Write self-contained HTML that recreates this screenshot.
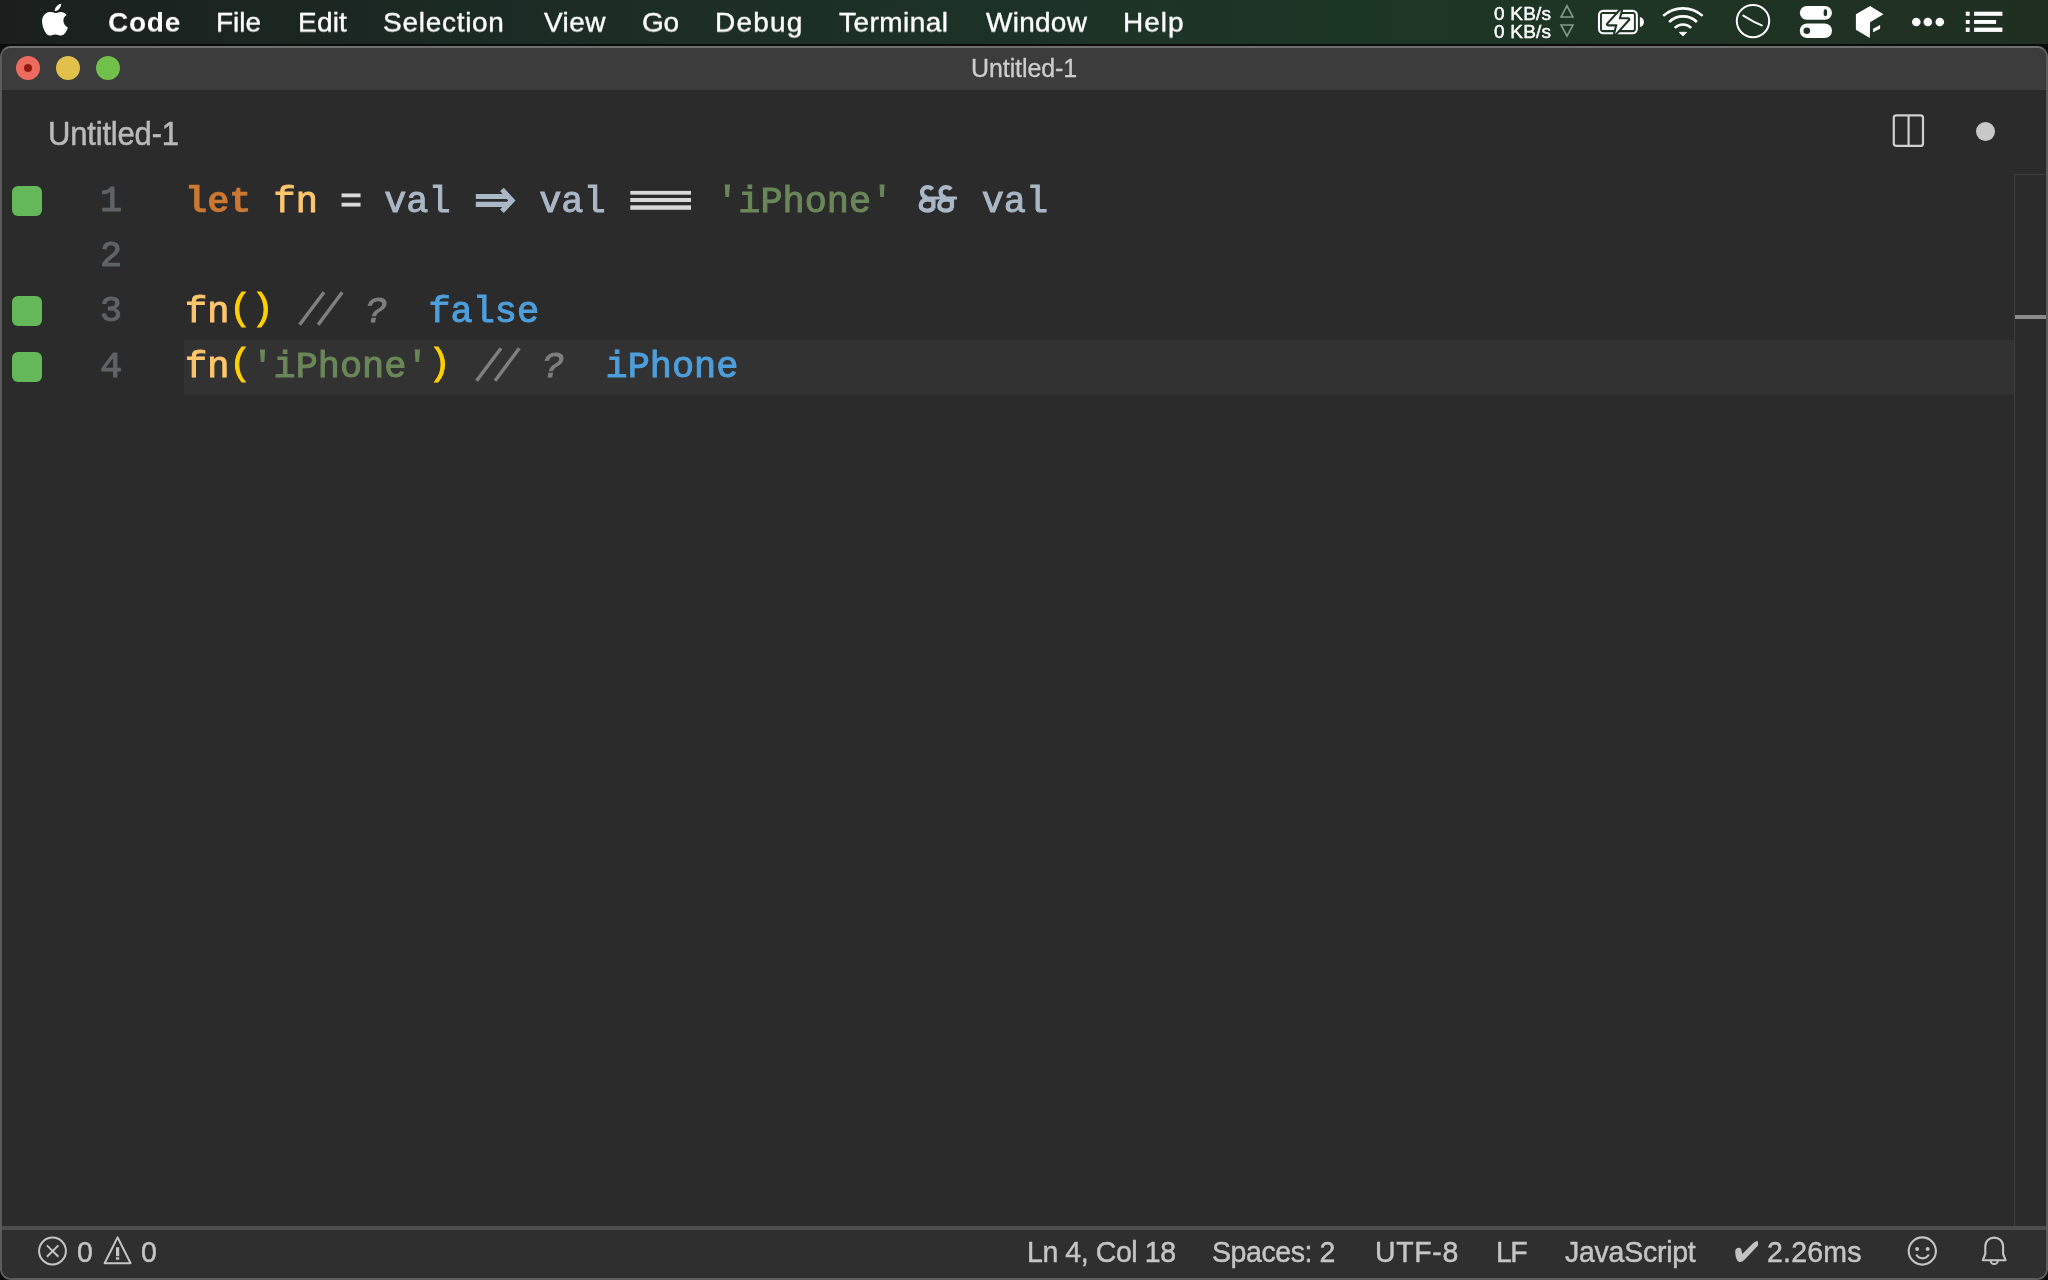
<!DOCTYPE html>
<html><head><meta charset="utf-8">
<style>
*{margin:0;padding:0;box-sizing:border-box}
html,body{width:2048px;height:1280px;overflow:hidden;background:#0b0d0c}
body{position:relative;font-family:"Liberation Sans",sans-serif}
.t,.code,.ln{will-change:transform}
.a{position:absolute}
.t{position:absolute;white-space:nowrap;line-height:1}
.code{position:absolute;white-space:pre;line-height:1;font-family:"Liberation Mono",monospace;-webkit-text-stroke:1px currentColor}
.code span{-webkit-text-stroke:1px currentColor}
.gm{position:absolute;left:12px;width:30px;height:30px;border-radius:6px;background:#65b85a}
.ln{position:absolute;font-family:"Liberation Mono",monospace;color:#5f6367;line-height:1;white-space:pre;-webkit-text-stroke:1.1px #5f6367}
</style></head>
<body>
<div class="a" style="left:0;top:0;width:2048px;height:44px;background:linear-gradient(90deg,#1a1f1e 0px,#1b2420 200px,#1c2d26 620px,#1d3326 1100px,#1c3626 1340px,#1f3424 1720px,#1f2e21 2048px)"></div>
<svg class="a" style="left:36px;top:0" width="40" height="40" viewBox="0 0 40 40"><path fill="#fff" d="M19.4 13.1 C17.5 12.2 15.5 11.8 13.4 12 C9 12.5 6 16.5 6.1 21.5 C6.2 27 9.5 35.5 13.8 35.6 C15.8 35.6 17 34.5 19.4 34.5 C21.8 34.5 23 35.6 25 35.6 C28.5 35.5 31 30.5 31.9 27.5 C29 26.3 27.4 23.5 27.4 20.6 C27.4 18 28.8 16 30.6 15 C29 12.8 26.8 12 24.7 12 C22.5 12 21 13.1 19.4 13.1 Z M18.75 11.1 C18.6 8 21.5 4.2 25.2 3.75 C25.3 7.2 22.2 11 18.75 11.1 Z"/></svg>
<div id="m_code" class="t" style="left:107.68px;top:8.96px;font-size:28px;letter-spacing:0.745px;font-family:'Liberation Sans',sans-serif;font-weight:bold;font-style:normal;color:#fff;transform:scaleY(0.9818);transform-origin:0 0;">Code</div><div id="m_file" class="t" style="left:216.36px;top:9.2px;font-size:28px;letter-spacing:-0.05px;font-family:'Liberation Sans',sans-serif;font-weight:normal;font-style:normal;color:#fff;-webkit-text-stroke:0.4px #fff;transform:scaleY(0.9818);transform-origin:0 0;">File</div><div id="m_edit" class="t" style="left:297.8px;top:9.2px;font-size:28px;letter-spacing:0.212px;font-family:'Liberation Sans',sans-serif;font-weight:normal;font-style:normal;color:#fff;-webkit-text-stroke:0.4px #fff;transform:scaleY(0.9818);transform-origin:0 0;">Edit</div><div id="m_sel" class="t" style="left:383.44px;top:9.2px;font-size:28px;letter-spacing:0.72px;font-family:'Liberation Sans',sans-serif;font-weight:normal;font-style:normal;color:#fff;-webkit-text-stroke:0.4px #fff;transform:scaleY(0.9818);transform-origin:0 0;">Selection</div><div id="m_view" class="t" style="left:543.56px;top:9.2px;font-size:28px;letter-spacing:0.424px;font-family:'Liberation Sans',sans-serif;font-weight:normal;font-style:normal;color:#fff;-webkit-text-stroke:0.4px #fff;transform:scaleY(0.9818);transform-origin:0 0;">View</div><div id="m_go" class="t" style="left:642.36px;top:9.2px;font-size:28px;letter-spacing:-0.32px;font-family:'Liberation Sans',sans-serif;font-weight:normal;font-style:normal;color:#fff;-webkit-text-stroke:0.4px #fff;transform:scaleY(0.9818);transform-origin:0 0;">Go</div><div id="m_debug" class="t" style="left:714.92px;top:9.2px;font-size:28px;letter-spacing:1.2px;font-family:'Liberation Sans',sans-serif;font-weight:normal;font-style:normal;color:#fff;-webkit-text-stroke:0.4px #fff;transform:scaleY(0.9818);transform-origin:0 0;">Debug</div><div id="m_term" class="t" style="left:839.0px;top:9.2px;font-size:28px;letter-spacing:0.457px;font-family:'Liberation Sans',sans-serif;font-weight:normal;font-style:normal;color:#fff;-webkit-text-stroke:0.4px #fff;transform:scaleY(0.9818);transform-origin:0 0;">Terminal</div><div id="m_win" class="t" style="left:985.64px;top:9.2px;font-size:28px;letter-spacing:0.256px;font-family:'Liberation Sans',sans-serif;font-weight:normal;font-style:normal;color:#fff;-webkit-text-stroke:0.4px #fff;transform:scaleY(0.9818);transform-origin:0 0;">Window</div><div id="m_help" class="t" style="left:1123.24px;top:9.2px;font-size:28px;letter-spacing:1.015px;font-family:'Liberation Sans',sans-serif;font-weight:normal;font-style:normal;color:#fff;-webkit-text-stroke:0.4px #fff;transform:scaleY(0.9818);transform-origin:0 0;">Help</div><div id="m_kb1" class="t" style="left:1494.4px;top:3.8px;font-size:19px;letter-spacing:0.224px;font-family:'Liberation Sans',sans-serif;font-weight:normal;-webkit-text-stroke:0.45px #fff;font-style:normal;color:#fff;">0 KB/s</div><div id="m_kb2" class="t" style="left:1494.4px;top:21.72px;font-size:19px;letter-spacing:0.224px;font-family:'Liberation Sans',sans-serif;font-weight:normal;-webkit-text-stroke:0.45px #fff;font-style:normal;color:#fff;">0 KB/s</div>
<!-- status icons top right -->
<svg class="a" style="left:1556px;top:0" width="22" height="44" viewBox="0 0 22 44">
  <path d="M11 5.8 L17 17 L5 17 Z" fill="none" stroke="#86958c" stroke-width="1.6" stroke-linejoin="miter"/>
  <path d="M5 25 L17 25 L11 36 Z" fill="none" stroke="#86958c" stroke-width="1.6"/>
</svg>
<svg class="a" style="left:1592px;top:4px" width="56" height="36" viewBox="0 0 56 36">
  <rect x="7" y="6.86" width="37.85" height="22.32" rx="4.2" fill="none" stroke="#fff" stroke-width="2.1"/>
  <rect x="9.96" y="9.96" width="31.94" height="15.97" rx="0.8" fill="#fff"/>
  <path d="M47.9 12.9 C51 13.5 51.9 15.8 51.9 17.9 C51.9 20 51 22.3 47.9 22.85 Z" fill="#fff"/>
  <path d="M29 5.9 L16 20.3 L25.5 20.3 L23.1 29.9 L36.3 15.3 L26.6 15.3 Z" fill="#fff" stroke="#1e3525" stroke-width="4.2" stroke-linejoin="round" paint-order="stroke"/>
</svg>
<svg class="a" style="left:1656px;top:2px" width="56" height="40" viewBox="0 0 56 40">
  <g fill="none" stroke="#fff" stroke-width="2.6">
  <path d="M7.2 13.9 A29.6 29.6 0 0 1 46.6 13.9"/>
  <path d="M13.1 20 A20 20 0 0 1 40.9 20"/>
  <path d="M18.75 25.9 A11.6 11.6 0 0 1 35.2 25.9"/>
  </g>
  <path d="M23.2 30.3 L30.7 30.3 L26.95 33.9 Z" fill="#fff" stroke="#fff" stroke-width="0.8" stroke-linejoin="round"/>
</svg>
<svg class="a" style="left:1732px;top:0" width="42" height="44" viewBox="0 0 42 44">
  <circle cx="21" cy="21.1" r="16.2" fill="none" stroke="#fff" stroke-width="2"/>
  <path d="M11.3 15.6 L22 21.8 L29.8 25.4" fill="none" stroke="#fff" stroke-width="1.9" stroke-linecap="round"/>
</svg>
<svg class="a" style="left:1796px;top:0" width="40" height="44" viewBox="0 0 40 44">
  <rect x="3.8" y="5.9" width="32.2" height="13.9" rx="6.95" fill="#fff"/>
  <rect x="3.8" y="23.4" width="32.2" height="14.7" rx="7.35" fill="#fff"/>
  <rect x="27.7" y="9.3" width="3.4" height="6.8" rx="1.7" fill="#1f3324"/>
  <circle cx="10.8" cy="30.8" r="3.3" fill="#1f3324"/>
</svg>
<svg class="a" style="left:1852px;top:0" width="36" height="44" viewBox="0 0 36 44">
  <path d="M3.9 14.2 L18.1 5.9 L31.5 14.2 L18.1 22.2 L17.8 38.1 L3.9 29.8 Z" fill="#fff"/>
  <path d="M21 28.8 L28.1 25.1 L28.1 28.8 L21 32.2 Z" fill="#fff"/>
</svg>
<svg class="a" style="left:1906px;top:0" width="44" height="44" viewBox="0 0 44 44">
  <circle cx="10.3" cy="22" r="4.3" fill="#fff"/><circle cx="21.8" cy="22" r="4.3" fill="#fff"/><circle cx="33.8" cy="22" r="4.3" fill="#fff"/>
</svg>
<svg class="a" style="left:1960px;top:0" width="48" height="44" viewBox="0 0 48 44">
  <rect x="5.8" y="11.7" width="3.9" height="4.1" fill="#fff"/><rect x="14.1" y="11.7" width="28.3" height="4.1" fill="#fff"/>
  <rect x="5.8" y="20" width="3.9" height="3.9" fill="#fff"/><rect x="14.1" y="20" width="22" height="3.9" fill="#fff"/>
  <rect x="5.8" y="27.6" width="3.9" height="4.3" fill="#fff"/><rect x="14.1" y="27.6" width="28.3" height="4.3" fill="#fff"/>
</svg>

<!-- window -->
<div class="a" style="left:0;top:46px;width:2048px;height:1234px;border-radius:11px;background:linear-gradient(#6f6f6f 0,#6f6f6f 3px,#5c5c5c 3px);overflow:hidden">
  <div class="a" style="left:2px;top:2px;width:2044px;height:1230px;border-radius:9px;background:#2b2b2b;overflow:hidden">
    <div class="a" style="left:0;top:0;width:2044px;height:42px;background:#3c3c3c"></div>
  </div>
</div>
<div class="a tl" style="left:16px;top:56px;width:24px;height:24px;border-radius:50%;background:#ed6a5e"></div>
<div class="a" style="left:24px;top:64px;width:8px;height:8px;border-radius:50%;background:#8e1a10"></div>
<div class="a" style="left:56px;top:56px;width:24px;height:24px;border-radius:50%;background:#e1c14b"></div>
<div class="a" style="left:96px;top:56px;width:24px;height:24px;border-radius:50%;background:#70c049"></div>
<div id="w_title" class="t" style="left:970.8px;top:55.96px;font-size:25px;letter-spacing:-0.089px;font-family:'Liberation Sans',sans-serif;font-weight:normal;font-style:normal;color:#cdcdcd;-webkit-text-stroke:0.3px #cdcdcd;transform:scaleY(1.0012);transform-origin:0 0;">Untitled-1</div>
<div id="w_tab" class="t" style="left:47.8px;top:117.0px;font-size:31px;letter-spacing:-0.178px;font-family:'Liberation Sans',sans-serif;font-weight:normal;font-style:normal;color:#b9b9b9;-webkit-text-stroke:0.5px #b9b9b9;transform:scaleY(1.0869);transform-origin:0 0;">Untitled-1</div>
<svg class="a" style="left:1888px;top:110px" width="40" height="40" viewBox="0 0 40 40">
  <rect x="5.8" y="5.3" width="29.2" height="30.6" rx="2.5" fill="none" stroke="#d0d0d0" stroke-width="2.2"/>
  <path d="M20.6 5.3 V35.9" stroke="#d0d0d0" stroke-width="2.2"/>
</svg>
<div class="a" style="left:1975.8px;top:121.5px;width:19.6px;height:19.6px;border-radius:50%;background:#c8c8c8"></div>

<!-- editor -->
<div class="a" style="left:184px;top:340px;width:1830px;height:54px;background:#323232"></div>
<div class="a" style="left:2014px;top:174px;width:1px;height:1052px;background:#3e3e3e"></div>
<div class="a" style="left:2014px;top:174px;width:32px;height:1px;background:#3e3e3e"></div>
<div class="a" style="left:2015px;top:315px;width:31px;height:4px;background:#8a8a8a"></div>
<div class="gm" style="top:186px"></div>
<div class="gm" style="top:296px"></div>
<div class="gm" style="top:351.5px"></div>
<div id="ln1" class="ln" style="left:100px;top:183px;font-size:36.88px">1</div><div id="ln2" class="ln" style="left:100px;top:238.2px;font-size:36.88px">2</div><div id="ln3" class="ln" style="left:100px;top:293.4px;font-size:36.88px">3</div><div id="ln4" class="ln" style="left:100px;top:348.6px;font-size:36.88px">4</div>
<div id="c1" class="code" style="left:184.5px;top:183.5px;font-size:36.88px"><span style="color:#cc7832;font-weight:bold;-webkit-text-stroke:0.3px #cc7832">let</span> <span style="color:#ffc66d;">fn</span> <span style="color:#dedede;">=</span> <span style="color:#a9b7c6;">val</span>    <span style="color:#a9b7c6;">val</span>     <span style="color:#6a8759;">'iPhone'</span>    <span style="color:#a9b7c6;">val</span></div>
<div id="c3" class="code" style="left:184.5px;top:293.8px;font-size:36.88px"><span style="color:#ffc66d;">fn</span><span style="color:#ffd000;position:relative;top:-3.5px">()</span>    <span style="color:#7f7f7f;font-style:italic;position:relative;left:3px">?</span>  <span style="color:#4d9fdc;">false</span></div>
<div id="c4" class="code" style="left:184.5px;top:349.1px;font-size:36.88px"><span style="color:#ffc66d;">fn</span><span style="color:#ffd000;position:relative;top:-3.5px">(</span><span style="color:#6a8759;">'iPhone'</span><span style="color:#ffd000;position:relative;top:-3.5px">)</span>    <span style="color:#7f7f7f;font-style:italic;position:relative;left:3px">?</span>  <span style="color:#4d9fdc;">iPhone</span></div>
<!-- comment slashes -->
<svg class="a" style="left:290px;top:285px" width="60" height="48" viewBox="0 0 60 48"><g stroke="#7f7f7f" stroke-width="3.5"><path d="M9.6 39.8 L34 7.3"/><path d="M28.1 39.8 L52.3 7.3"/></g></svg>
<svg class="a" style="left:467.3px;top:340.5px" width="60" height="48" viewBox="0 0 60 48"><g stroke="#7f7f7f" stroke-width="3.5"><path d="M9.6 39.8 L34 7.3"/><path d="M28.1 39.8 L52.3 7.3"/></g></svg>
<!-- ligatures line1 -->
<svg class="a" style="left:470px;top:180px" width="50" height="40" viewBox="0 0 50 40">
  <path d="M5.8 14 H38 V19 H5.8 Z M5.8 21.7 H38 V26.9 H5.8 Z" fill="#a9b7c6"/>
  <path d="M30.1 10.9 L33.8 7.7 L45.5 20.4 L33.8 33 L30.1 29.6 L38.2 20.4 Z" fill="#a9b7c6"/>
</svg>
<svg class="a" style="left:626px;top:180px" width="70" height="40" viewBox="0 0 70 40">
  <rect x="4.3" y="10.9" width="60.7" height="3.8" fill="#d8d8d8"/>
  <rect x="4.3" y="18" width="60.7" height="4" fill="#d8d8d8"/>
  <rect x="4.3" y="25.3" width="60.7" height="4.5" fill="#d8d8d8"/>
</svg>
<svg class="a" style="left:910px;top:176px" width="60" height="46" viewBox="0 0 60 46">
  <g fill="none" stroke="#a9b7c6" stroke-width="4.3">
    <path d="M22.4 13.6 C21 11.6 19.4 11.2 17.4 11.2 C14 11.2 12.1 13.6 12.1 16.3 C12.1 19 14 20.9 17 21.8"/>
    <path d="M40.9 13.6 C39.5 11.6 37.9 11.2 35.9 11.2 C32.5 11.2 30.6 13.6 30.6 16.3 C30.6 19 32.5 20.9 35.5 21.8"/>
    <path d="M23.4 21.9 V32.5"/>
    <path d="M41.9 21.9 V32.5"/>
    <path d="M23.3 24.2 C22 23.8 20 23.6 17.6 23.6 C13.2 23.6 10.7 26.3 10.7 29.4 C10.7 32.5 13.2 34.6 17.6 34.6 C20.3 34.6 22.2 33.5 23.3 31.8"/>
    <path d="M41.8 24.2 C40.5 23.8 38.5 23.6 36.1 23.6 C31.7 23.6 29.2 26.3 29.2 29.4 C29.2 32.5 31.7 34.6 36.1 34.6 C38.8 34.6 40.7 33.5 41.8 31.8"/>
  </g>
  <path d="M12.5 20.4 H47 V23.4 H12.5 Z" fill="#a9b7c6"/>
</svg>

<!-- status bar -->
<div class="a" style="left:2px;top:1226px;width:2044px;height:4px;background:#4d4d4d"></div>
<div class="a" style="left:2px;top:1230px;width:2044px;height:48px;background:#2f2f2f;border-radius:0 0 9px 9px"></div>
<svg class="a" style="left:36px;top:1234px" width="34" height="34" viewBox="0 0 34 34">
  <circle cx="16.5" cy="17" r="13.4" fill="none" stroke="#c5c5c5" stroke-width="2"/>
  <path d="M10.9 11.4 L22.4 22.8 M22.4 11.4 L10.9 22.8" stroke="#c5c5c5" stroke-width="2"/>
</svg>
<svg class="a" style="left:100px;top:1234px" width="36" height="34" viewBox="0 0 36 34">
  <path d="M17.6 3.4 L30.6 29.2 L4.6 29.2 Z" fill="none" stroke="#c5c5c5" stroke-width="2" stroke-linejoin="round"/>
  <rect x="16" y="13.2" width="3.2" height="9" fill="#c5c5c5"/><rect x="16" y="23.3" width="3.2" height="2.4" fill="#c5c5c5"/>
</svg>
<svg class="a" style="left:1904px;top:1232px" width="36" height="36" viewBox="0 0 36 36">
  <circle cx="18.3" cy="19" r="13.6" fill="none" stroke="#c5c5c5" stroke-width="2.1"/>
  <circle cx="13.1" cy="17.1" r="2" fill="#c5c5c5"/><circle cx="23.6" cy="17.1" r="2" fill="#c5c5c5"/>
  <path d="M12.3 22.6 A7.1 7.1 0 0 0 24.8 22.6" fill="none" stroke="#c5c5c5" stroke-width="2.1"/>
</svg>
<svg class="a" style="left:1978px;top:1232px" width="34" height="36" viewBox="0 0 34 36">
  <path d="M4.8 28.2 L7.3 22 L7.3 14.5 C7.3 9 11.3 5.6 16.2 5.6 C21.1 5.6 25.1 9 25.1 14.5 L25.1 22 L27.6 28.2 Z" fill="none" stroke="#c5c5c5" stroke-width="2.1" stroke-linejoin="round"/>
  <path d="M12.6 28.4 A3.6 3.6 0 0 0 19.8 28.4" fill="none" stroke="#c5c5c5" stroke-width="2.1"/>
</svg><svg class="a" style="left:1730px;top:1236px" width="32" height="32" viewBox="0 0 32 32">
  <path d="M8.8 11.7 C6.5 11.7 5.2 13.5 5.2 15.5 C5.2 19 6 23 7.5 24.8 C8.5 26 10 26.3 11 26 C12.5 25.6 13.5 24.8 15 23.3 L28 9.5 C28.2 8 28.2 6 27.5 5 C26 5 24.5 6 22.5 7.8 L12.3 18 C11.8 15.5 11.5 13.5 11 12.8 C10.5 12 9.7 11.7 8.8 11.7 Z" fill="#c2c2c2"/>
</svg>
<div id="s_e0" class="t" style="left:76.68px;top:1237.36px;font-size:28.5px;letter-spacing:0px;font-family:'Liberation Sans',sans-serif;font-weight:normal;font-style:normal;color:#c5c5c5;-webkit-text-stroke:0.45px #c5c5c5;transform:scaleY(1.0518);transform-origin:0 0;">0</div><div id="s_w0" class="t" style="left:141.28px;top:1237.36px;font-size:28.5px;letter-spacing:0px;font-family:'Liberation Sans',sans-serif;font-weight:normal;font-style:normal;color:#c5c5c5;-webkit-text-stroke:0.45px #c5c5c5;transform:scaleY(1.0518);transform-origin:0 0;">0</div><div id="s_ln" class="t" style="left:1026.56px;top:1237.36px;font-size:28.5px;letter-spacing:-0.423px;font-family:'Liberation Sans',sans-serif;font-weight:normal;font-style:normal;color:#c5c5c5;-webkit-text-stroke:0.45px #c5c5c5;transform:scaleY(1.0518);transform-origin:0 0;">Ln 4, Col 18</div><div id="s_sp" class="t" style="left:1212.44px;top:1237.36px;font-size:28.5px;letter-spacing:-0.42px;font-family:'Liberation Sans',sans-serif;font-weight:normal;font-style:normal;color:#c5c5c5;-webkit-text-stroke:0.45px #c5c5c5;transform:scaleY(1.0518);transform-origin:0 0;">Spaces: 2</div><div id="s_utf" class="t" style="left:1374.56px;top:1237.36px;font-size:28.5px;letter-spacing:0.64px;font-family:'Liberation Sans',sans-serif;font-weight:normal;font-style:normal;color:#c5c5c5;-webkit-text-stroke:0.45px #c5c5c5;transform:scaleY(1.0518);transform-origin:0 0;">UTF-8</div><div id="s_lf" class="t" style="left:1495.8px;top:1237.36px;font-size:28.5px;letter-spacing:-1.6px;font-family:'Liberation Sans',sans-serif;font-weight:normal;font-style:normal;color:#c5c5c5;-webkit-text-stroke:0.45px #c5c5c5;transform:scaleY(1.0518);transform-origin:0 0;">LF</div><div id="s_js" class="t" style="left:1565.4px;top:1237.36px;font-size:28.5px;letter-spacing:-0.253px;font-family:'Liberation Sans',sans-serif;font-weight:normal;font-style:normal;color:#c5c5c5;-webkit-text-stroke:0.45px #c5c5c5;transform:scaleY(1.0518);transform-origin:0 0;">JavaScript</div><div id="s_ms" class="t" style="left:1766.52px;top:1237.36px;font-size:28.5px;letter-spacing:0.224px;font-family:'Liberation Sans',sans-serif;font-weight:normal;font-style:normal;color:#c5c5c5;-webkit-text-stroke:0.45px #c5c5c5;transform:scaleY(1.0518);transform-origin:0 0;">2.26ms</div>
</body></html>
